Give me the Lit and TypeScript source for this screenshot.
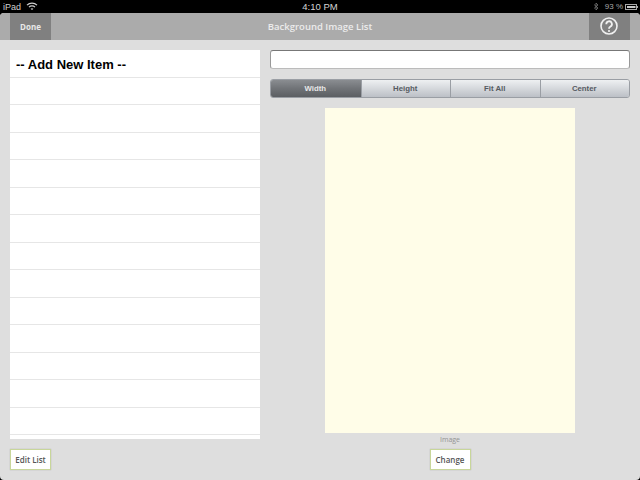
import { LitElement, html, css } from "lit";
import { customElement } from "lit/decorators.js";

@customElement("app-root")
export class AppRoot extends LitElement {
  static styles = css`
    :host { display: block; width: 640px; height: 480px; background: #000; overflow: hidden; font-family: "Liberation Sans", sans-serif; }
    .status { height: 13px; display: grid; grid-template-columns: 1fr auto 1fr; align-items: center; padding: 0 3px; color: #cfcfcf; font-size: 9px; background: #000; }
    .status-left, .status-right { display: flex; align-items: center; gap: 5px; }
    .status-right { justify-content: flex-end; gap: 2px; color: #a8a8a8; font-size: 8px; padding-right: 0; margin-right: -1px; }
    .bt { margin-right: 4px; }
    .clock { font-size: 9.5px; color: #d5d5d5; }
    .screen { height: 467px; border-radius: 4px; overflow: hidden; background: #dedede; display: flex; flex-direction: column; }
    .toolbar { height: 27px; flex: none; background: #ababab; display: grid; grid-template-columns: 41px 1fr 41px; padding: 0 10px; align-items: stretch; }
    .tool-btn { background: #808080; color: #e8e8e8; display: flex; align-items: center; justify-content: center; font: 700 8px "Open Sans", sans-serif; }
    .help { padding: 0 2px 1px 0; }
    .title { color: #ececec; font: 600 9.5px "Open Sans", sans-serif; display: flex; align-items: center; justify-content: center; }
    .content { flex: 1; display: grid; grid-template-columns: 250px 360px; column-gap: 10px; padding: 10px 10px 0; }
    .left, .right { display: flex; flex-direction: column; min-height: 0; }
    .list { height: 389px; background: #fff; overflow: hidden; }
    .row { height: 27.5px; box-sizing: border-box; border-bottom: 1px solid #e6e6e6; display: flex; align-items: center; padding: 2px 0 0 6px; font-size: 13px; font-weight: 700; color: #000; }
    .foot-btn { width: 41px; height: 21px; box-sizing: border-box; background: #fff; border: 1.5px solid #c8d69a; box-shadow: 0 0 1px #aaa; color: #555; display: flex; align-items: center; justify-content: center; font: 600 8px "Open Sans", sans-serif; }
    .edit { margin-top: 10px; }
    .field { height: 19px; box-sizing: border-box; background: #fff; border: 1px solid #999; border-top-color: #777; border-bottom-color: #bbb; border-radius: 3px; }
    .segments { margin-top: 10px; height: 19px; display: grid; grid-template-columns: repeat(4, 1fr); border-radius: 3px; overflow: hidden; border: 1px solid #9a9ea4; box-sizing: border-box; }
    .seg { background: linear-gradient(#eef0f2, #d5d8dc 50%, #bcc0c6); border-left: 1px solid #9a9ea4; color: #555a61; display: flex; align-items: center; justify-content: center; font-size: 7.8px; font-weight: 700; padding-right: 1px; }
    .seg:first-child { border-left: 0; }
    .seg.on { background: linear-gradient(#8a8d91, #707377 50%, #5c5f63); color: #e8e8e8; }
    .preview { display: flex; flex-direction: column; align-items: center; margin-top: 10px; }
    .image { width: 250px; height: 325px; background: #fffde8; }
    .label { height: 12px; color: #939393; font: 400 7px "Open Sans", sans-serif; display: flex; align-items: center; }
    .change { margin-top: 4px; }
    svg { display: block; }
  `;

  render() {
    return html`
      <div class="status">
        <div class="status-left">
          <span>iPad</span>
          <svg width="12" height="9" viewBox="0 0 12 9" fill="none" stroke="#d0d0d0" stroke-width="1.2">
            <path d="M1 3.2 A7 7 0 0 1 11 3.2" />
            <path d="M3 5.2 A4.2 4.2 0 0 1 9 5.2" />
            <path d="M5 7.2 A1.5 1.5 0 0 1 7 7.2" />
          </svg>
        </div>
        <div class="clock">4:10 PM</div>
        <div class="status-right">
          <svg class="bt" width="6" height="9" viewBox="0 0 6 9" fill="none" stroke="#777" stroke-width="0.8">
            <path d="M1 2.5 L5 6 L3 8 V1 L5 3 L1 6.5" />
          </svg>
          <span>93 %</span>
          <svg width="13" height="6" viewBox="0 0 13 6">
            <rect x="0.5" y="0.5" width="11" height="5" fill="none" stroke="#a8a8a8" />
            <rect x="2" y="2" width="8.5" height="2" fill="#c8c8c8" />
            <rect x="12" y="2" width="1" height="2" fill="#a8a8a8" />
          </svg>
        </div>
      </div>
      <div class="screen">
        <div class="toolbar">
          <div class="tool-btn">Done</div>
          <div class="title">Background Image List</div>
          <div class="tool-btn help">
            <svg width="18" height="18" viewBox="0 0 18 18" fill="none" stroke="#f0f0f0">
              <circle cx="9" cy="9" r="8" stroke-width="1.6" />
              <path d="M6.3 7.2 A2.8 2.8 0 1 1 10.5 9.5 C9.4 10.1 9 10.6 9 11.8" stroke-width="1.8" />
              <circle cx="9" cy="14" r="1.1" fill="#f0f0f0" stroke="none" />
            </svg>
          </div>
        </div>
        <div class="content">
          <div class="left">
            <div class="list">
              <div class="row">-- Add New Item --</div>
              ${Array.from({ length: 14 }, () => html`<div class="row"></div>`)}
            </div>
            <div class="foot-btn edit">Edit List</div>
          </div>
          <div class="right">
            <div class="field"></div>
            <div class="segments">
              <div class="seg on">Width</div>
              <div class="seg">Height</div>
              <div class="seg">Fit All</div>
              <div class="seg">Center</div>
            </div>
            <div class="preview">
              <div class="image"></div>
              <div class="label">Image</div>
              <div class="foot-btn change">Change</div>
            </div>
          </div>
        </div>
      </div>
    `;
  }
}
